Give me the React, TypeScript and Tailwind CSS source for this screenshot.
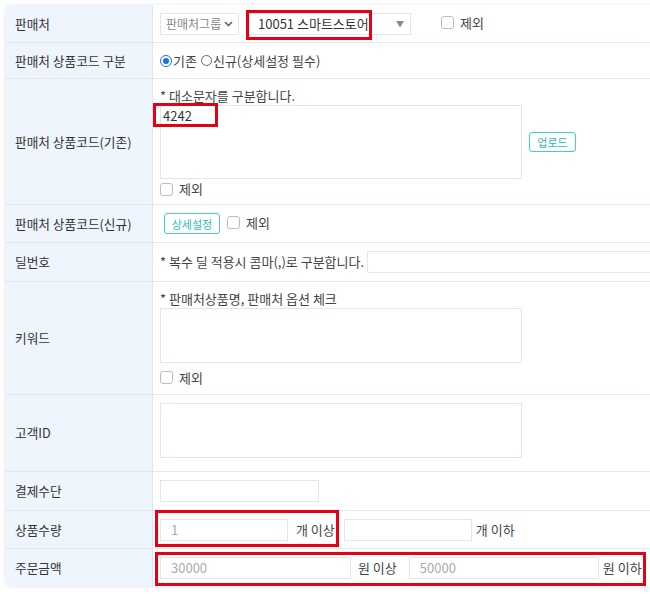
import React from "react";

const font = { fontFamily: '"Noto Sans CJK KR", "Noto Sans", sans-serif' };

function Check({ label }: { label: string }) {
  return (
    <span className="inline-flex items-center gap-[6px] text-[13px] text-[#444]">
      <span className="h-[13px] w-[13px] rounded-[3px] border border-[#bdbdbd] bg-white" />
      {label}
    </span>
  );
}

function Row({ label, h, children, last }: { label: string; h: string; children: React.ReactNode; last?: boolean }) {
  return (
    <div className={`flex ${h} ${last ? "" : "border-b border-[#e3e8ee]"}`}>
      <div className="flex w-[148px] shrink-0 items-center border-r border-[#dfe5ec] bg-[#eef5fd] pl-[10px] text-[12.7px] text-[#333]">
        {label}
      </div>
      <div className="relative flex min-w-0 flex-1 flex-col justify-center pl-[7px] text-[13px] leading-[18px] text-[#444]">{children}</div>
    </div>
  );
}

const Red = ({ className }: { className: string }) => (
  <div className={`pointer-events-none absolute border-[3px] border-[#e60012] ${className}`} />
);

export default function App() {
  return (
    <div className="h-[600px] w-[650px] overflow-hidden bg-white" style={font}>
      <div className="ml-[5px] mt-[5px] w-[680px] overflow-hidden rounded-[8px] bg-white shadow-[0_0_3px_rgba(0,0,0,0.12)]">
        <Row label="판매처" h="h-[38px]">
          <div className="flex items-center">
            <div className="flex h-[22px] w-[79px] items-center justify-between border border-[#e0e6ec] px-[5px] text-[12px] text-[#888]">
              판매처그룹
              <svg width="9" height="6" viewBox="0 0 9 6"><path d="M1 1l3.5 3.5L8 1" fill="none" stroke="#666" strokeWidth="1.6" /></svg>
            </div>
            <div className="ml-[8px] flex h-[22px] w-[164px] items-center justify-between border border-[#e0e6ec] pl-[10px] pr-[6px] text-[#333]">
              10051 스마트스토어
              <span className="text-[8px] text-[#888]">▼</span>
            </div>
            <div className="ml-[30px]">
              <Check label="제외" />
            </div>
          </div>
          <Red className="left-[93px] top-[5px] h-[30px] w-[126px]" />
        </Row>

        <Row label="판매처 상품코드 구분" h="h-[36px]">
          <div className="flex items-center">
            <span className="flex h-[12px] w-[12px] items-center justify-center rounded-full border-[1.5px] border-[#1a73e8]">
              <span className="h-[6px] w-[6px] rounded-full bg-[#1a73e8]" />
            </span>
            <span className="ml-[1px]">기존</span>
            <span className="ml-[4px] h-[11px] w-[11px] rounded-full border border-[#666]" />
            <span className="ml-[1px]">신규(상세설정 필수)</span>
          </div>
        </Row>

        <Row label="판매처 상품코드(기존)" h="h-[126px]">
          <div className="mt-[4px]">* 대소문자를 구분합니다.</div>
          <div className="flex items-center">
            <div className="h-[74px] w-[362px] border border-[#dfe6ee] px-[2px] pt-[1px] text-[13px] text-[#333]">4242</div>
            <button className="ml-[7px] h-[20px] w-[47px] rounded-[3px] border border-[#3fcfcf] text-[11px] text-[#2fb9bd]">업로드</button>
          </div>
          <div className="mt-[1px]">
            <Check label="제외" />
          </div>
          <Red className="left-0 top-[24px] h-[24px] w-[65px]" />
        </Row>

        <Row label="판매처 상품코드(신규)" h="h-[38px]">
          <div className="flex items-center">
            <button className="ml-[4px] h-[21px] w-[56px] rounded-[3px] border border-[#3fcfcf] text-[11px] text-[#2fb9bd]">상세설정</button>
            <span className="ml-[7px]">
              <Check label="제외" />
            </span>
          </div>
        </Row>

        <Row label="딜번호" h="h-[39px]">
          <div className="flex items-center">
            <span>* 복수 딜 적용시 콤마(,)로 구분합니다.</span>
            <div className="ml-[3px] h-[22px] flex-1 border border-[#dfe6ee]" />
          </div>
        </Row>

        <Row label="키워드" h="h-[113px]">
          <div className="mt-[2px]">* 판매처상품명, 판매처 옵션 체크</div>
          <div className="h-[55px] w-[362px] border border-[#dfe6ee]" />
          <div className="mt-[6px]">
            <Check label="제외" />
          </div>
        </Row>

        <Row label="고객ID" h="h-[77px]">
          <div className="mb-[5px] h-[55px] w-[362px] border border-[#dfe6ee]" />
        </Row>

        <Row label="결제수단" h="h-[39px]">
          <div className="h-[22px] w-[159px] border border-[#dfe6ee]" />
        </Row>

        <Row label="상품수량" h="h-[38px]">
          <div className="flex items-center">
            <div className="flex h-[22px] w-[128px] items-center border border-[#dfe6ee] pl-[10px] text-[#aaa]">1</div>
            <span className="ml-[8px]">개 이상</span>
            <div className="ml-[9px] h-[22px] w-[128px] border border-[#dfe6ee]" />
            <span className="ml-[4px]">개 이하</span>
          </div>
          <Red className="left-[2px] top-[-1px] h-[37px] w-[184px]" />
        </Row>

        <Row label="주문금액" h="h-[38px]" last>
          <div className="flex items-center">
            <div className="flex h-[22px] w-[191px] items-center border border-[#dfe6ee] pl-[10px] text-[#aaa]">30000</div>
            <span className="ml-[7px]">원 이상</span>
            <div className="ml-[12px] flex h-[22px] w-[190px] items-center border border-[#dfe6ee] pl-[10px] text-[#aaa]">50000</div>
            <span className="ml-[4px]">원 이하</span>
          </div>
          <Red className="left-[2px] top-[3px] h-[34px] w-[491px]" />
        </Row>
      </div>
    </div>
  );
}
